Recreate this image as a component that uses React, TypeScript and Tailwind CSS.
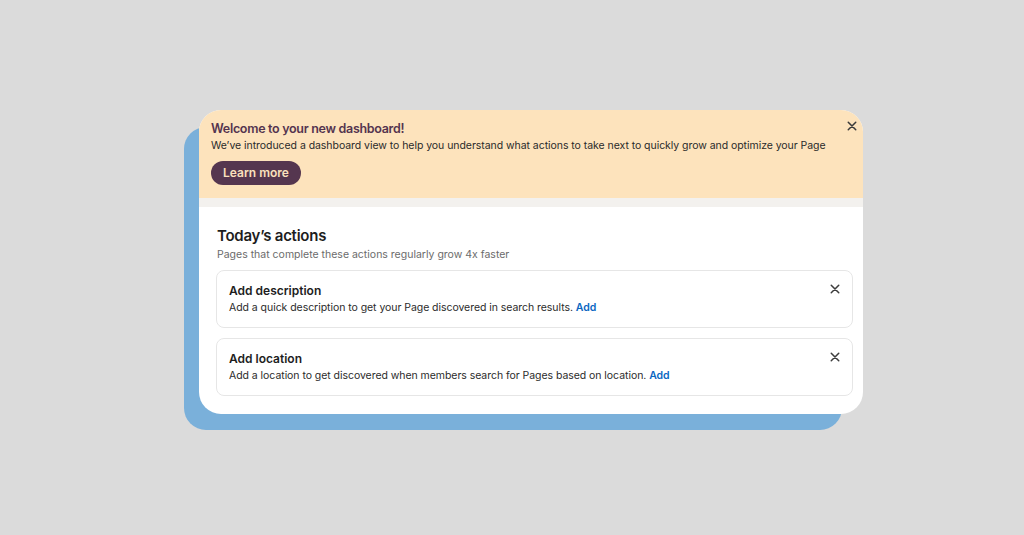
import React from "react";

function XIcon({ className = "" }: { className?: string }) {
  return (
    <svg viewBox="0 0 12 12" className={className} fill="none" stroke="currentColor" strokeWidth="1.8" strokeLinecap="round">
      <path d="M1.5 1.5 L10.5 10.5 M10.5 1.5 L1.5 10.5" />
    </svg>
  );
}

function ActionCard({ title, text }: { title: string; text: string }) {
  return (
    <div className="flex items-start rounded-[8px] border border-[#e6e6e6] bg-white pl-[12px] pr-[11px] pt-[12px] pb-[11px]">
      <div className="flex-1">
        <div className="text-[12px] leading-[16px] font-semibold text-[#1d1d1d]">{title}</div>
        <div className="text-[10.5px] leading-[17px] tracking-[-0.05px] text-[#2b2b2b]">
          {text} <span className="font-semibold text-[#0a66c2]">Add</span>
        </div>
      </div>
      <div className="flex h-[12px] w-[12px] items-center justify-center text-[#3d3d3d]">
        <XIcon className="h-[10px] w-[10px]" />
      </div>
    </div>
  );
}

export default function App() {
  return (
    <div
      className="flex h-[535px] w-[1024px] items-start justify-center bg-[#dbdbdb]"
      style={{ fontFamily: "Inter, 'Noto Sans', 'Liberation Sans', sans-serif" }}
    >
      <div className="relative ml-[38px] mt-[110px] w-[664px]">
        <div className="absolute left-[-15px] top-[17px] h-[303px] w-[658px] rounded-[22px] bg-[#7ab0da]" />
        <div className="relative flex flex-col overflow-hidden rounded-[22px] bg-white">
          <div className="flex items-start bg-[#fde3bc] pl-[12px] pr-[5px] pt-[10px] pb-[13px]">
            <div className="flex-1">
              <div className="text-[12.5px] leading-[17px] font-semibold tracking-[-0.3px] text-[#54344f]">
                Welcome to your new dashboard!
              </div>
              <div className="whitespace-nowrap text-[10.5px] leading-[17px] tracking-[-0.05px] text-[#2a2a2a]">
                We’ve introduced a dashboard view to help you understand what actions to take next to quickly grow and optimize your Page
              </div>
              <div className="mt-[7px] flex h-[24px] w-[90px] items-center justify-center rounded-full bg-[#55364f] text-[12px] font-semibold text-[#fbe1bd]">
                Learn more
              </div>
            </div>
            <div className="flex h-[12px] w-[12px] items-center justify-center text-[#3a3a3a]">
              <XIcon className="h-[10px] w-[10px]" />
            </div>
          </div>
          <div className="h-[9px] bg-[#f3f1ee]" />
          <div className="flex flex-col pl-[17px] pr-[10px] pt-[19px] pb-[18px]">
            <div className="pl-[1px] text-[15px] leading-[20px] font-semibold tracking-[-0.25px] text-[#1d1d1d]">Today’s actions</div>
            <div className="mt-[1px] pl-[1px] text-[10.5px] leading-[16px] text-[#6b6b6b]">
              Pages that complete these actions regularly grow 4x faster
            </div>
            <div className="mt-[7px] flex flex-col gap-[10px]">
              <ActionCard
                title="Add description"
                text="Add a quick description to get your Page discovered in search results."
              />
              <ActionCard
                title="Add location"
                text="Add a location to get discovered when members search for Pages based on location."
              />
            </div>
          </div>
        </div>
      </div>
    </div>
  );
}
